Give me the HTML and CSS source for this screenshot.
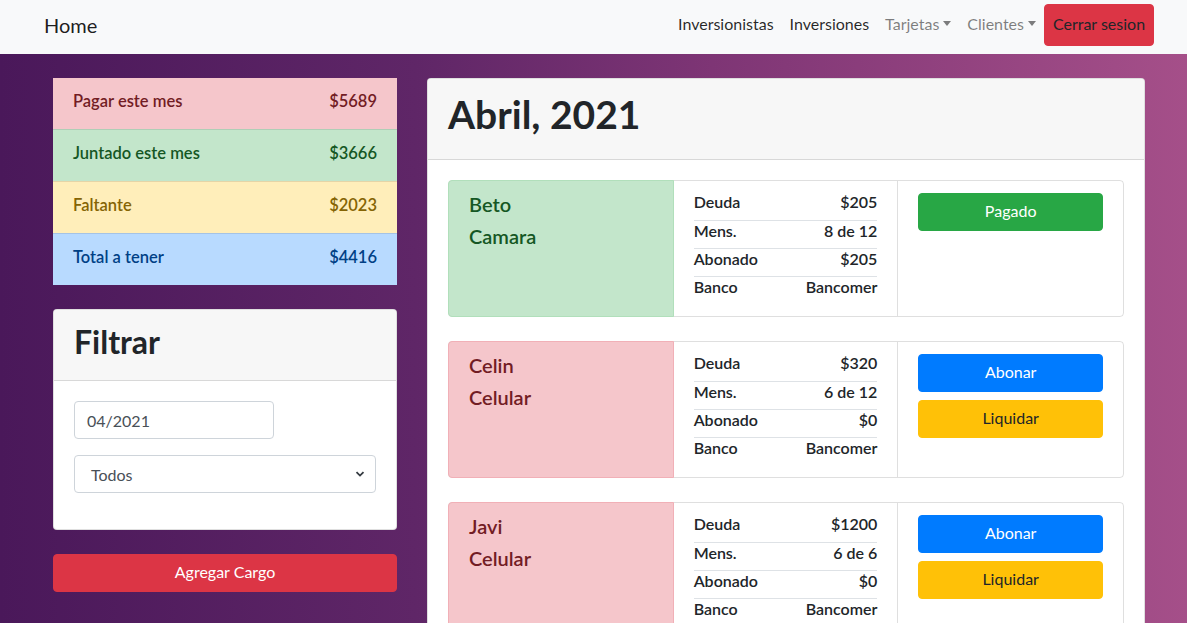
FILE: index.html
```html
<!DOCTYPE html>
<html lang="es">
<head>
<meta charset="utf-8">
<title>Home</title>
<link rel="stylesheet" href="styles.css">
</head>
<body>
<nav class="navbar">
  <a class="brand" href="#">Home</a>
  <ul class="nav">
    <li><a class="nav-link" href="#">Inversionistas</a></li>
    <li><a class="nav-link" href="#">Inversiones</a></li>
    <li><a class="nav-link muted dropdown" href="#">Tarjetas</a></li>
    <li><a class="nav-link muted dropdown" href="#">Clientes</a></li>
    <li><button class="btn btn-logout">Cerrar sesion</button></li>
  </ul>
</nav>

<main class="main">
  <aside class="side">
    <ul class="summary">
      <li class="sum-item sum-danger"><span>Pagar este mes</span><span>$5689</span></li>
      <li class="sum-item sum-success"><span>Juntado este mes</span><span>$3666</span></li>
      <li class="sum-item sum-warning"><span>Faltante</span><span>$2023</span></li>
      <li class="sum-item sum-primary"><span>Total a tener</span><span>$4416</span></li>
    </ul>

    <section class="card filter">
      <header class="card-header"><h2 class="h2">Filtrar</h2></header>
      <div class="card-body">
        <input class="input input-month" type="text" value="04/2021">
        <div class="select">
          <span>Todos</span>
          <svg class="chev" width="10" height="8" viewBox="0 0 10 8"><path d="M1.5 2.2 L5 5.6 L8.5 2.2" fill="none" stroke="#343a40" stroke-width="1.8"/></svg>
        </div>
      </div>
    </section>

    <button class="btn btn-block btn-danger">Agregar Cargo</button>
  </aside>

  <section class="card month">
    <header class="card-header"><h1 class="h1">Abril, 2021</h1></header>
    <div class="card-body items">
      <article class="item">
        <div class="who who-success"><div>Beto</div><div>Camara</div></div>
        <div class="facts">
          <div class="row"><span>Deuda</span><span>$205</span></div>
          <div class="row"><span>Mens.</span><span>8 de 12</span></div>
          <div class="row"><span>Abonado</span><span>$205</span></div>
          <div class="row"><span>Banco</span><span>Bancomer</span></div>
        </div>
        <div class="actions">
          <button class="btn btn-success">Pagado</button>
        </div>
      </article>

      <article class="item">
        <div class="who who-danger"><div>Celin</div><div>Celular</div></div>
        <div class="facts">
          <div class="row"><span>Deuda</span><span>$320</span></div>
          <div class="row"><span>Mens.</span><span>6 de 12</span></div>
          <div class="row"><span>Abonado</span><span>$0</span></div>
          <div class="row"><span>Banco</span><span>Bancomer</span></div>
        </div>
        <div class="actions">
          <button class="btn btn-primary">Abonar</button>
          <button class="btn btn-warning">Liquidar</button>
        </div>
      </article>

      <article class="item">
        <div class="who who-danger"><div>Javi</div><div>Celular</div></div>
        <div class="facts">
          <div class="row"><span>Deuda</span><span>$1200</span></div>
          <div class="row"><span>Mens.</span><span>6 de 6</span></div>
          <div class="row"><span>Abonado</span><span>$0</span></div>
          <div class="row"><span>Banco</span><span>Bancomer</span></div>
        </div>
        <div class="actions">
          <button class="btn btn-primary">Abonar</button>
          <button class="btn btn-warning">Liquidar</button>
        </div>
      </article>
    </div>
  </section>
</main>
</body>
</html>
```

FILE: styles.css
```css
* { box-sizing: border-box; }
html, body { margin: 0; padding: 0; }
body {
  font-family: Lato, "Open Sans", "Liberation Sans", sans-serif;
  font-size: 16px;
  line-height: 1.5;
  color: #212529;
  min-height: 100vh;
  background: linear-gradient(to right, #4a185a 0%, #5f2667 35%, #7e3575 60%, #a54f89 100%);
  overflow: hidden;
}

/* navbar */
.navbar {
  height: 54px;
  background: #f8f9fa;
  display: flex;
  align-items: center;
  justify-content: space-between;
  padding: 0 33px 4px 44px;
}
.brand {
  font-size: 20px;
  color: rgba(0,0,0,.9);
  text-decoration: none;
}
.nav {
  display: flex;
  align-items: center;
  list-style: none;
  margin: 0;
  padding: 0;
}
.nav-link {
  display: block;
  padding: 6px 8px 8px;
  color: rgba(0,0,0,.85);
  text-decoration: none;
}
.nav-link.muted { color: rgba(0,0,0,.5); }
.dropdown::after {
  content: "";
  display: inline-block;
  margin-left: 4px;
  vertical-align: 4px;
  border-top: 5px solid;
  border-left: 4.5px solid transparent;
  border-right: 4.5px solid transparent;
}

/* buttons */
.btn {
  display: inline-block;
  font-family: inherit;
  font-size: 16px;
  line-height: 22px;
  height: 38px;
  padding: 6px 12px 8px;
  border: 1px solid transparent;
  border-radius: 4px;
  cursor: pointer;
  text-align: center;
  white-space: nowrap;
}
.btn-logout { background: #dc3545; border-color: #dc3545; color: #212529; width: 110px; height: 42px; padding: 8px 6px 10px; margin-top: 0; }
.btn-danger { background: #dc3545; border-color: #dc3545; color: #fff; }
.btn-success { background: #28a745; border-color: #28a745; color: #fff; }
.btn-primary { background: #007bff; border-color: #007bff; color: #fff; }
.btn-warning { background: #ffc107; border-color: #ffc107; color: #212529; }
.btn-block { display: block; width: 100%; }

/* layout */
.main {
  display: flex;
  align-items: flex-start;
  gap: 30px;
  padding: 24px 42px 0 53px;
}
.side {
  width: 344px;
  flex: none;
  display: flex;
  flex-direction: column;
  gap: 24px;
}

/* summary list */
.summary {
  list-style: none;
  margin: 0;
  padding: 0;
}
.sum-item {
  display: flex;
  justify-content: space-between;
  align-items: center;
  height: 52px;
  padding: 0 20px 4px;
  font-size: 16.5px;
  font-weight: 600;
}
.sum-item:first-child { height: 51px; }
.sum-item + .sum-item { border-top: 1px solid rgba(0,0,0,.1); }
.sum-danger { background: #f5c6cb; color: #721c24; }
.sum-success { background: #c3e6cb; color: #155724; }
.sum-warning { background: #ffeeba; color: #856404; }
.sum-primary { background: #b8daff; color: #004085; }

/* cards */
.card {
  background: #fff;
  border: 1px solid rgba(0,0,0,.125);
  border-radius: 4px;
}
.card-header {
  background: #f7f7f7;
  border-bottom: 1px solid rgba(0,0,0,.125);
  border-radius: 4px 4px 0 0;
  padding: 12px 20px;
}
.card-body { padding: 20px; }
.h1, .h2 { margin: 0 0 8px; font-weight: 700; line-height: 1.2; }
.h1 { font-size: 39px; padding-bottom: 1px; }
.h2 { font-size: 32px; padding-top: 1px; margin-bottom: 7px; }

.input, .select {
  display: flex;
  align-items: center;
  height: 38px;
  border: 1px solid #ced4da;
  border-radius: 4px;
  background: #fff;
  color: #495057;
  font-family: inherit;
  font-size: 16px;
  padding: 6px 12px;
}
.input-month { width: 200px; margin-bottom: 16px; }
.select { justify-content: space-between; margin-bottom: 16px; padding: 6px 12px 6px 16px; }
.select span { position: relative; top: 1px; }
.chev { margin-right: -2px; }

/* month card */
.month { flex: 1; }
.items { display: flex; flex-direction: column; gap: 24px; }
.item {
  display: grid;
  grid-template-columns: 1fr 1fr 1fr;
  height: 137px;
  border: 1px solid rgba(0,0,0,.125);
  border-radius: 4px;
}
.who {
  margin: -1px 0 -1px -1px;
  border: 1px solid;
  border-radius: 4px 0 0 4px;
  padding: 7px 20px;
  font-size: 20px;
  font-weight: 600;
  line-height: 32px;
}
.who-success { background: #c3e6cb; border-color: #b1dfbb; color: #155724; }
.who-danger { background: #f5c6cb; border-color: #f1b0b7; color: #721c24; }
.facts {
  padding: 11px 20px 12px;
  border-right: 1px solid rgba(0,0,0,.125);
  font-size: 16px;
  font-weight: 600;
}
.row {
  display: flex;
  justify-content: space-between;
  height: 28px;
  line-height: 20px;
}
.row + .row { border-top: 1px solid #dee2e6; }
.actions {
  padding: 12px 20px;
  display: flex;
  flex-direction: column;
  gap: 8px;
}
```
